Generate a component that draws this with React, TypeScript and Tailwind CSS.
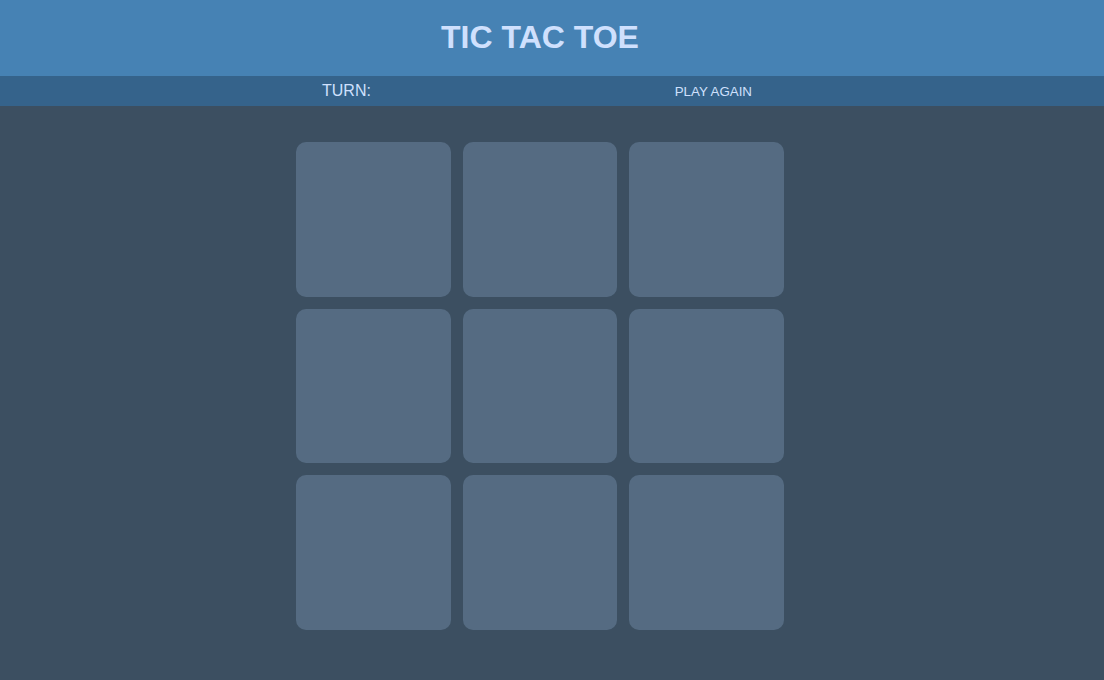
export default function App() {
  const cells = Array.from({ length: 9 }, (_, i) => i);

  return (
    <div
      className="min-h-[680px] w-full bg-[#3c4f61]"
      style={{ fontFamily: '"Liberation Sans", Arial, sans-serif' }}
    >
      {/* Header */}
      <div className="h-[76px] bg-[#4682b4]">
        <div className="w-[1080px] h-full flex items-center justify-center pb-[2px]">
          <h1 className="text-[32px] font-bold text-[#cfe0fd] leading-none">TIC TAC TOE</h1>
        </div>
      </div>

      {/* Status bar */}
      <div className="h-[30px] bg-[#35638b]">
        <div className="w-[1080px] h-full flex items-center">
          <div className="w-[488px] mx-auto flex items-center justify-between pl-[26px] pr-[32px] text-[#cfe0fd]">
            <span className="text-[16px]">TURN:</span>
            <button className="text-[13.33px] pt-px">PLAY AGAIN</button>
          </div>
        </div>
      </div>

      {/* Board */}
      <div className="w-[1080px] pt-[36px] flex justify-center">
        <div className="grid grid-cols-3 gap-[12px] w-[488px]">
          {cells.map((c) => (
            <div key={c} className="h-[154.67px] rounded-[10px] bg-[#556b82]" />
          ))}
        </div>
      </div>
    </div>
  );
}
